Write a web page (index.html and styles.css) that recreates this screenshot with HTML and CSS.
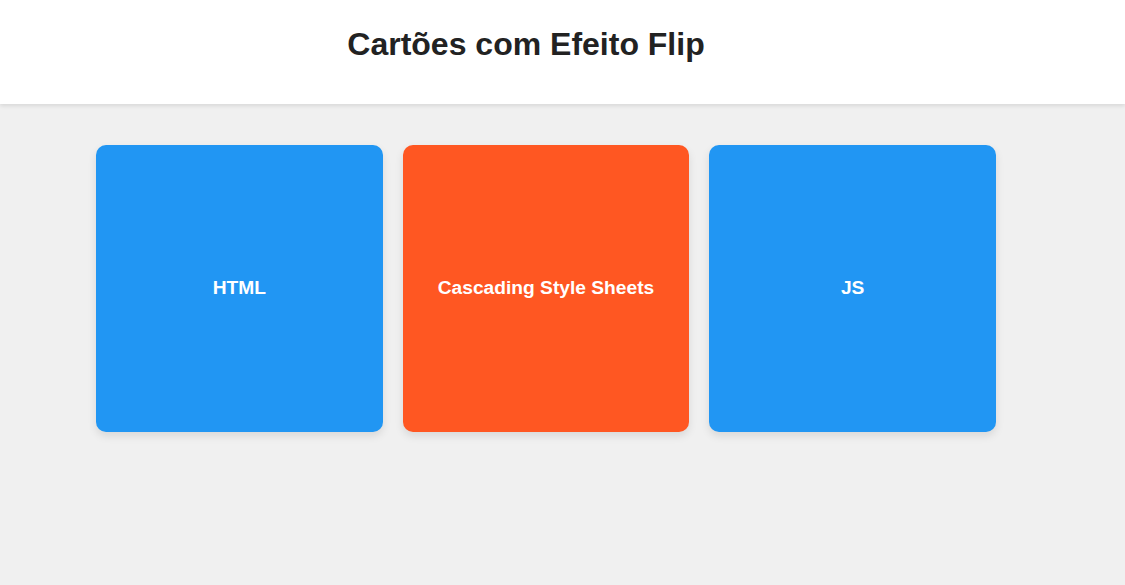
FILE: index.html
```html
<!DOCTYPE html>
<html lang="pt">
<head>
<meta charset="utf-8">
<title>Cartões com Efeito Flip</title>
<link rel="stylesheet" href="styles.css">
</head>
<body>
<header class="topbar">
  <h1 class="title">Cartões com Efeito Flip</h1>
</header>
<main class="cards">
  <div class="card card-blue">HTML</div>
  <div class="card card-orange">Cascading Style Sheets</div>
  <div class="card card-blue">JS</div>
</main>
</body>
</html>
```
FILE: styles.css
```css
html, body {
  margin: 0;
  padding: 0;
}
body {
  background: #f0f0f0;
  font-family: "Liberation Sans", Arial, sans-serif;
  height: 585px;
  overflow: hidden;
}
.topbar {
  background: #fff;
  height: 104px;
  box-shadow: 0 2px 4px rgba(0, 0, 0, 0.1);
  display: flex;
  align-items: center;
  justify-content: center;
  padding-right: 73px;
  box-sizing: border-box;
  position: relative;
  z-index: 1;
}
.title {
  margin: 0 0 16px 0;
  font-size: 32px;
  font-weight: bold;
  color: #222;
}
.cards {
  display: grid;
  grid-template-columns: repeat(3, 1fr);
  gap: 20px;
  width: 900px;
  margin: 41px 0 0 96px;
}
.card {
  height: 287px;
  box-sizing: border-box;
  padding-bottom: 2px;
  border-radius: 10px;
  display: flex;
  align-items: center;
  justify-content: center;
  color: #fff;
  font-size: 19.2px;
  font-weight: bold;
  box-shadow: 0 4px 8px rgba(0, 0, 0, 0.1);
}
.card-blue {
  background: #2196f3;
}
.card-orange {
  background: #ff5722;
}
```
